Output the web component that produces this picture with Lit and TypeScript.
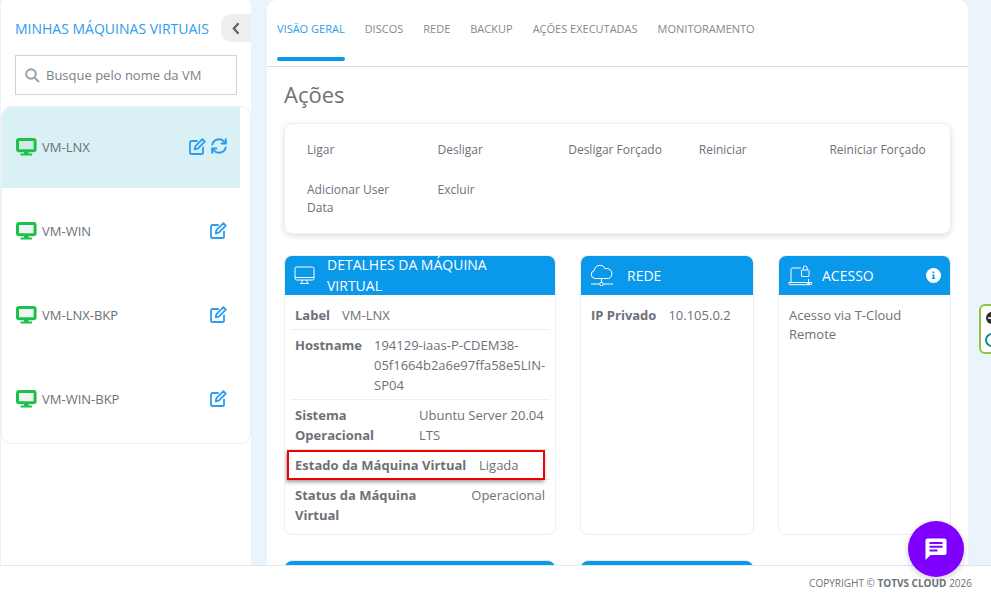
import { LitElement, html, css, svg } from 'lit';
import { customElement } from 'lit/decorators.js';

const vmIcon = html`<svg class="vm-icon" width="21" height="18" viewBox="0 0 21 18">
  <rect x="1.5" y="1.5" width="17.6" height="11.2" rx="1.5" fill="rgba(190,215,205,0.25)" stroke="#1fc04a" stroke-width="3"/>
  <rect x="4.5" y="15.4" width="11.6" height="2.2" rx="0.6" fill="#1fc04a"/>
  <rect x="8" y="13" width="4.6" height="3" fill="#1fc04a"/>
</svg>`;

const editIcon = html`<svg width="17" height="17" viewBox="0 0 17 17" fill="none" stroke="#2a9df0" stroke-width="1.8" stroke-linejoin="round" stroke-linecap="round">
  <path d="M8 3H2.6A1.6 1.6 0 0 0 1 4.6v9.8A1.6 1.6 0 0 0 2.6 16h9.8a1.6 1.6 0 0 0 1.6-1.6V9.5"/>
  <path d="M13.4 1.2l2.4 2.4-7 7-3.1.7.7-3.1z"/>
</svg>`;

const syncIcon = html`<svg width="16" height="16" viewBox="0 0 16 16" fill="none" stroke="#2a9df0" stroke-width="2" stroke-linecap="round" stroke-linejoin="round">
  <path d="M1.3 6.6A6.9 6.9 0 0 1 13.4 3.8l1.2 1.4"/>
  <path d="M14.8 1.3v4.2h-4.2"/>
  <path d="M14.7 9.4A6.9 6.9 0 0 1 2.6 12.2l-1.2-1.4"/>
  <path d="M1.2 14.7v-4.2h4.2"/>
</svg>`;

const detailsIcon = svg`<rect x="1" y="1" width="19" height="13" rx="1.5"/><path d="M1 11.5h19M8.5 14l-.8 3M12.5 14l.8 3M6 17.5h9"/>`;
const cloudIcon = svg`<path d="M6 14.5H5a4 4 0 0 1-.6-7.9A5.5 5.5 0 0 1 15 4.8a4.9 4.9 0 0 1 3.6 9.7H6z"/><path d="M11.5 14.5v4M1 20h8.5M13.5 20H23"/><circle cx="11.5" cy="20" r="1.8"/>`;
const laptopIcon = svg`<path d="M3 17V4.5A1.5 1.5 0 0 1 4.5 3H13M20.5 14v3"/><path d="M.8 17.5h23v1.2a1 1 0 0 1-1 1H1.8a1 1 0 0 1-1-1z"/><rect x="13.5" y="5" width="7.5" height="6.5" rx=".6"/><path d="M15.2 5V3a2 2 0 0 1 4 0v2M19 18.6h3"/>`;

interface Row { label: string; value: string; labelWidth: number; right?: boolean; marked?: boolean; }

const ROWS: Row[] = [
  { label: 'Label', value: 'VM-LNX', labelWidth: 47 },
  { label: 'Hostname', value: '194129-iaas-P-CDEM38-05f1664b2a6e97ffa58e5LIN-SP04', labelWidth: 79 },
  { label: 'Sistema Operacional', value: 'Ubuntu Server 20.04 LTS', labelWidth: 124 },
  { label: 'Estado da Máquina Virtual', value: 'Ligada', labelWidth: 184, marked: true },
  { label: 'Status da Máquina Virtual', value: 'Operacional', labelWidth: 140, right: true },
];

const ACTIONS = ['Ligar', 'Desligar', 'Desligar Forçado', 'Reiniciar', 'Reiniciar Forçado', 'Adicionar User Data', 'Excluir'];
const TABS = ['Visão Geral', 'Discos', 'Rede', 'Backup', 'Ações Executadas', 'Monitoramento'];
const VMS = ['VM-LNX', 'VM-WIN', 'VM-LNX-BKP', 'VM-WIN-BKP'];

@customElement('app-root')
export class AppRoot extends LitElement {
  static styles = css`
    :host {
      display: block;
      position: relative;
      width: 991px;
      height: 599px;
      overflow: hidden;
      background: #ebf3fb;
      font-family: 'Open Sans', sans-serif;
      color: #6c7178;
    }
    * { box-sizing: border-box; }

    .page { display: flex; height: 565px; overflow: hidden; padding-left: 1px; gap: 16px; }

    .sidebar {
      width: 250px;
      height: 580px;
      margin-top: -4px;
      background: #fff;
      border-radius: 10px;
      padding-top: 4px;
      flex: none;
    }
    .side-head { display: flex; align-items: center; justify-content: space-between; height: 55px; padding-left: 14px; padding-top: 1px; }
    .side-title { font-size: 14px; color: #2f9cec; white-space: nowrap; }
    .collapse {
      width: 30px; height: 28px;
      background: #eeeeee;
      border-radius: 10px 0 0 10px;
      display: flex; align-items: center; justify-content: center;
    }
    .search {
      margin-left: 14px;
      width: 222px; height: 40px;
      border: 1px solid #cdd3da;
      display: flex; align-items: center; gap: 6px;
      padding-left: 9px;
      font-size: 13px;
      color: #7b8087;
    }
    .vm-list {
      margin-top: 11px;
      width: 250px;
      height: 338px;
      border: 1px solid #eeeeee;
      border-radius: 10px;
      padding-top: 1px;
    }
    .vm {
      display: flex; align-items: center;
      height: 84px;
      padding: 0 13px 0 14px;
      font-size: 13px;
      gap: 5px;
      width: 238px;
    }
    .vm.active { background: #d9f0f5; height: 81px; padding-bottom: 1px; border-radius: 10px 0 0 0; margin-top: -1px; }
    .vm.active + .vm { margin-top: 1px; }
    .vm-icon { flex: none; margin-top: -1px; }
    .vm-name { flex: 1; }
    .vm-actions { display: flex; gap: 5px; align-items: center; margin-top: -2px; }

    .main {
      width: 701px;
      height: 600px;
      background: #fff;
      border-radius: 10px;
      flex: none;
    }
    .tabs { display: flex; gap: 20px; height: 67px; padding: 20px 0 0 10px; border-bottom: 1px solid #d5dce4; }
    .tab { font-size: 11px; line-height: 18px; color: #85898f; text-transform: uppercase; white-space: nowrap; }
    .tab.active { color: #2f9cec; }
    .tab-bar { height: 4px; margin-top: 19px; border-radius: 2px; background: #0a98ea; }

    .content { padding: 0 17px; }
    h2 { margin: 0; font-size: 22px; font-weight: 400; line-height: 30px; padding-top: 12px; height: 56px; color: #6c7178; }

    .actions {
      display: grid;
      grid-template-columns: repeat(5, 1fr);
      align-content: start;
      height: 111px;
      padding: 6px 6px 0;
      border: 1px solid #eeeeee;
      border-radius: 8px;
      box-shadow: 0 2px 6px rgba(0, 0, 0, 0.13);
    }
    .action { font-size: 12px; line-height: 18px; padding: 11px 16px; }

    .cards { display: grid; grid-template-columns: 272px 174px 173px; column-gap: 24px; row-gap: 25px; margin-top: 21px; }
    .card { height: 280px; border: 1px solid #eceef0; border-radius: 8px; overflow: hidden; }
    .card-head {
      display: flex; align-items: center;
      height: 40px;
      margin: -1px -1px 0;
      background: #0a98ea;
      color: #fff;
      font-size: 14px;
      line-height: 21px;
      text-transform: uppercase;
      padding: 0 10px;
    }
    .card-head svg.line { flex: none; fill: none; stroke: #fff; stroke-width: 1; }
    .card-title { flex: 1; padding-right: 10px; }
    .card-body { padding: 5px 5px; font-size: 13px; line-height: 20px; }
    .row { position: relative; display: flex; padding: 5px 3px 4px 5px; border-bottom: 1px solid #eeeeee; }
    .row:last-child { border-bottom: none; }
    .row b { flex: none; font-weight: 700; padding-right: 12px; }
    .row span { flex: 1; overflow-wrap: anywhere; }
    .row span.right { text-align: right; padding-right: 2px; }
    .mark {
      position: absolute;
      left: -3px; right: 5px; top: 0; bottom: -1px;
      border: 2px solid #f00000;
      box-shadow: -1px 2px 4px rgba(0, 0, 0, 0.4);
      pointer-events: none;
    }
    .plain { display: flex; padding: 5px; }
    .plain b { font-weight: 700; padding-right: 12px; }
    .note { padding: 6px 5px 5px; line-height: 19px; }

    .footer {
      height: 34px;
      background: #fff;
      border-top: 1px solid #e4e6e8;
      display: flex; justify-content: flex-end; align-items: center;
      padding-right: 19px;
      font-size: 10px;
      color: #6c7178;
    }
    .chat {
      position: absolute;
      left: 908px; top: 521px;
      width: 56px; height: 56px;
      border-radius: 50%;
      background: #8000ff;
      box-shadow: 0 2px 6px rgba(0, 0, 0, 0.2);
      display: flex; align-items: center; justify-content: center;
    }
    .widget {
      position: absolute;
      left: 979px; top: 304px;
      width: 30px; height: 50px;
      border: 2px solid #8cc63f;
      border-radius: 6px;
      background: #fff;
      padding: 3px 0 0 4px;
    }
  `;

  renderRow(r: Row) {
    return html`<div class="row">
      <b style="width:${r.labelWidth}px">${r.label}</b>
      <span class=${r.right ? 'right' : ''}>${r.value}</span>
      ${r.marked ? html`<div class="mark"></div>` : ''}
    </div>`;
  }

  render() {
    return html`
      <div class="page">
        <aside class="sidebar">
          <div class="side-head">
            <div class="side-title">MINHAS MÁQUINAS VIRTUAIS</div>
            <div class="collapse">
              <svg width="8" height="13" viewBox="0 0 8 13" fill="none" stroke="#5f6368" stroke-width="2.2"><path d="M6.5 1.2L1.8 6.5l4.7 5.3"/></svg>
            </div>
          </div>
          <div class="search">
            <svg width="15" height="15" viewBox="0 0 15 15" fill="none" stroke="#9a9fa5" stroke-width="2"><circle cx="6" cy="6" r="4.8"/><path d="M9.6 9.6L14 14"/></svg>
            Busque pelo nome da VM
          </div>
          <div class="vm-list">
            ${VMS.map((vm, i) => html`<div class="vm ${i === 0 ? 'active' : ''}">
              ${vmIcon}
              <div class="vm-name">${vm}</div>
              <div class="vm-actions">${editIcon}${i === 0 ? syncIcon : ''}</div>
            </div>`)}
          </div>
        </aside>

        <main class="main">
          <nav class="tabs">
            ${TABS.map((t, i) => html`<div class="tab ${i === 0 ? 'active' : ''}">
              ${t}${i === 0 ? html`<div class="tab-bar"></div>` : ''}
            </div>`)}
          </nav>
          <div class="content">
            <h2>Ações</h2>
            <div class="actions">
              ${ACTIONS.map(a => html`<div class="action">${a}</div>`)}
            </div>
            <div class="cards">
              <section class="card">
                <div class="card-head">
                  <svg class="line" width="21" height="18" viewBox="0 0 21 18" style="margin-right:12px">${detailsIcon}</svg>
                  <div class="card-title">Detalhes da Máquina Virtual</div>
                </div>
                <div class="card-body">${ROWS.map(r => this.renderRow(r))}</div>
              </section>
              <section class="card">
                <div class="card-head">
                  <svg class="line" width="24" height="22" viewBox="0 0 24 22" style="margin-right:13px">${cloudIcon}</svg>
                  <div class="card-title">Rede</div>
                </div>
                <div class="card-body"><div class="plain"><b>IP Privado</b><span>10.105.0.2</span></div></div>
              </section>
              <section class="card">
                <div class="card-head">
                  <svg class="line" width="25" height="21" viewBox="0 0 25 21" style="margin-right:9px">${laptopIcon}</svg>
                  <div class="card-title">Acesso</div>
                  <svg width="15" height="15" viewBox="0 0 15 15"><circle cx="7.5" cy="7.5" r="7.5" fill="#fff"/><rect x="6.6" y="3.6" width="1.8" height="1.7" fill="#0a98ea"/><path d="M6.1 6.4h2.3v3.6h.8v1H5.9v-1h.8V7.4h-.6z" fill="#0a98ea"/></svg>
                </div>
                <div class="card-body"><div class="note">Acesso via T-Cloud Remote</div></div>
              </section>
              <section class="card"><div class="card-head"></div></section>
              <section class="card"><div class="card-head"></div></section>
            </div>
          </div>
        </main>
      </div>

      <footer class="footer"><div>COPYRIGHT © <strong>TOTVS CLOUD</strong> 2026</div></footer>

      <div class="widget">
        <svg width="10" height="44" viewBox="0 0 10 44">
          <circle cx="7" cy="9" r="6" fill="#2b2b2b"/>
          <path d="M3 9h8" stroke="#fff" stroke-width="1.6"/>
          <circle cx="7" cy="31" r="6" fill="none" stroke="#0f8a8f" stroke-width="2"/>
        </svg>
      </div>

      <div class="chat">
        <svg width="24" height="24" viewBox="0 0 24 24">
          <path fill="#fff" d="M3.5 1.5h17a2 2 0 0 1 2 2V16a2 2 0 0 1-2 2H6.5L1.5 23V3.5a2 2 0 0 1 2-2z"/>
          <path stroke="#8000ff" stroke-width="2" d="M5.5 6h13M5.5 9.8h13M5.5 13.5h8"/>
        </svg>
      </div>
    `;
  }
}
